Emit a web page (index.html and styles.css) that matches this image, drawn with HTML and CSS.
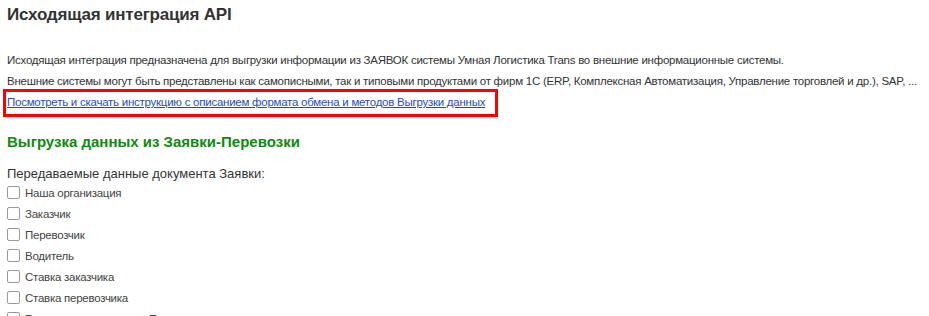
FILE: index.html
```html
<!DOCTYPE html>
<html>
	<head lang="ru">
		<meta charset="UTF-8">
		<title>Исходящая интеграция API</title>
		<link rel="stylesheet" href="styles.css">
	</head>
	<body>
		<div class="page">
			<h1 class="title">Исходящая интеграция API</h1>

			<div class="intro">
				<p>Исходящая интеграция предназначена для выгрузки информации из ЗАЯВОК системы Умная Логистика Trans во внешние информационные системы.</p>
				<p>Внешние системы могут быть представлены как самописными, так и типовыми продуктами от фирм 1С (ERP, Комплексная Автоматизация, Управление торговлей и др.), SAP, ...</p>
				<div class="link-box">
					<a href="#">Посмотреть и скачать инструкцию с описанием формата обмена и методов Выгрузки данных</a>
				</div>
			</div>

			<h2 class="section">Выгрузка данных из Заявки-Перевозки</h2>

			<div class="fields">
				<div class="fields-title">Передаваемые данные документа Заявки:</div>
				<label class="check"><span class="box"></span>Наша организация</label>
				<label class="check"><span class="box"></span>Заказчик</label>
				<label class="check"><span class="box"></span>Перевозчик</label>
				<label class="check"><span class="box"></span>Водитель</label>
				<label class="check"><span class="box"></span>Ставка заказчика</label>
				<label class="check"><span class="box"></span>Ставка перевозчика</label>
				<label class="check"><span class="box"></span>Транспортное средство Перевозчика</label>
			</div>
		</div>
	</body>
</html>
```

FILE: styles.css
```css
*{
	padding: 0;
	margin: 0;
	box-sizing: border-box;
}
html,body{
	height: 100%;
	overflow: hidden;
}
body{
	background: #fff;
	font-family: "Liberation Sans", Arial, sans-serif;
	color: #333;
}
.page{
	padding: 5px 7px;
}

.title{
	font-size: 17px;
	font-weight: bold;
	color: #333;
	line-height: 20px;
	letter-spacing: -0.2px;
}

.intro{
	margin-top: 25px;
	font-size: 11.5px;
	letter-spacing: -0.25px;
	line-height: 20.5px;
	color: #333;
}
.intro p{
	white-space: nowrap;
}
.link-box{
	margin-top: -2px;
	margin-left: -4px;
	width: 495px;
	height: 28px;
	border: 3px solid #f00;
	padding: 0 1px;
	line-height: 21px;
}
.link-box a{
	color: #1e4fb4;
	text-decoration: underline;
	white-space: nowrap;
}

.section{
	margin-top: 15px;
	font-size: 15px;
	font-weight: bold;
	color: #0e8a0e;
	line-height: 20px;
}

.fields{
	margin-top: 14px;
}
.fields-title{
	font-size: 13px;
	color: #333;
	line-height: 16px;
}
.check{
	display: flex;
	align-items: center;
	height: 21px;
	font-size: 11.5px;
	letter-spacing: -0.25px;
	color: #444;
}
.check .box{
	width: 13px;
	height: 13px;
	border: 1px solid #9a9a9a;
	border-radius: 2px;
	margin-right: 5px;
	background: #fff;
	flex: none;
}
```
